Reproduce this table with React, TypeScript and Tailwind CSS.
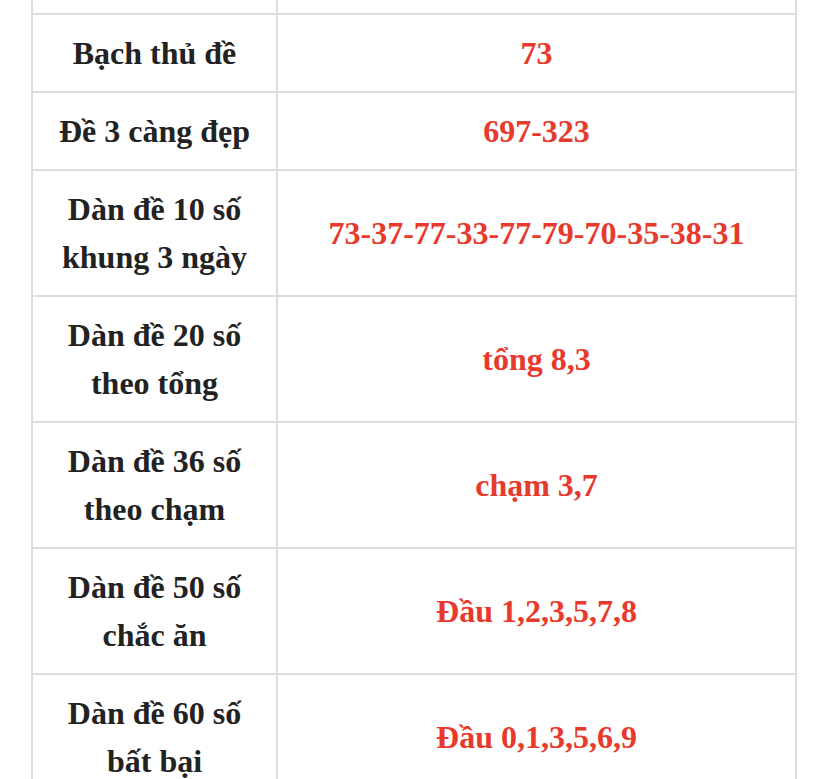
import React from "react";

const rows: { label: string[]; value: string }[] = [
  { label: ["Bạch thủ đề"], value: "73" },
  { label: ["Đề 3 càng đẹp"], value: "697-323" },
  { label: ["Dàn đề 10 số", "khung 3 ngày"], value: "73-37-77-33-77-79-70-35-38-31" },
  { label: ["Dàn đề 20 số", "theo tổng"], value: "tổng 8,3" },
  { label: ["Dàn đề 36 số", "theo chạm"], value: "chạm 3,7" },
  { label: ["Dàn đề 50 số", "chắc ăn"], value: "Đầu 1,2,3,5,7,8" },
  { label: ["Dàn đề 60 số", "bất bại"], value: "Đầu 0,1,3,5,6,9" },
];

export default function App() {
  return (
    <div
      className="w-[828px] h-[779px] overflow-hidden bg-white"
      style={{ fontFamily: '"Liberation Serif", "Times New Roman", serif' }}
    >
      <div className="ml-[31px] w-[766px] border-x-2 border-[#dddddd] text-[32px] leading-[48px] font-bold">
        <div className="flex h-[15px] border-b-2 border-[#dddddd]">
          <div className="w-[245px] border-r-2 border-[#dddddd]" />
          <div className="flex-1" />
        </div>
        {rows.map((r, i) => (
          <div key={i} className="flex border-b-2 border-[#dddddd]">
            <div className="w-[245px] shrink-0 border-r-2 border-[#dddddd] py-[14px] flex flex-col items-center justify-center text-[#222222] text-center">
              {r.label.map((l, j) => (
                <div key={j}>{l}</div>
              ))}
            </div>
            <div className="flex-1 py-[14px] flex items-center justify-center text-[#e8392d] text-center">
              {r.value}
            </div>
          </div>
        ))}
      </div>
    </div>
  );
}
